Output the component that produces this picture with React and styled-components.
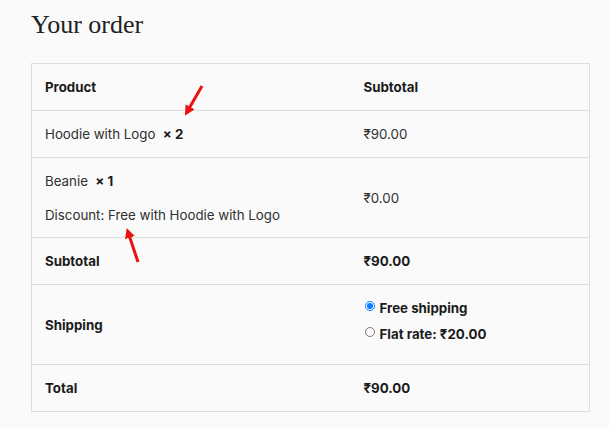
import React from "react";
import styled, { createGlobalStyle } from "styled-components";

const GlobalStyle = createGlobalStyle`
  html, body {
    margin: 0;
    background: #fafafa;
  }
  body {
    font-family: Inter, "Noto Sans", sans-serif;
    color: #1e1e1e;
  }
`;

function App() {
  return (
    <Page>
      <GlobalStyle />
      <Title>Your order</Title>
      <TableWrap>
        <OrderTable>
          <colgroup>
            <col style={{ width: 319 }} />
            <col />
          </colgroup>
          <thead>
            <tr>
              <HeadCell>Product</HeadCell>
              <HeadCell>Subtotal</HeadCell>
            </tr>
          </thead>
          <tbody>
            <tr>
              <Cell>
                Hoodie with Logo&nbsp;&nbsp;<Qty>× 2</Qty>
              </Cell>
              <Cell>₹90.00</Cell>
            </tr>
            <tr>
              <Cell $tall>
                <ItemLine>
                  Beanie&nbsp;&nbsp;<Qty>× 1</Qty>
                </ItemLine>
                <ItemLine>Discount: Free with Hoodie with Logo</ItemLine>
              </Cell>
              <Cell>₹0.00</Cell>
            </tr>
          </tbody>
          <tfoot>
            <tr>
              <HeadCell>Subtotal</HeadCell>
              <HeadCell>₹90.00</HeadCell>
            </tr>
            <tr>
              <HeadCell>Shipping</HeadCell>
              <HeadCell $tall>
                <RadioList>
                  <RadioRow>
                    <Radio type="radio" name="ship" defaultChecked />
                    Free shipping
                  </RadioRow>
                  <RadioRow>
                    <Radio type="radio" name="ship" />
                    Flat rate: ₹20.00
                  </RadioRow>
                </RadioList>
              </HeadCell>
            </tr>
            <tr>
              <HeadCell>Total</HeadCell>
              <HeadCell>₹90.00</HeadCell>
            </tr>
          </tfoot>
        </OrderTable>
        <Arrow width="609" height="428" viewBox="0 0 609 428">
          <defs>
            <marker id="tip" markerWidth="3.4" markerHeight="3.4" refX="2" refY="1.7" orient="auto">
              <path d="M0,0 L3.4,1.7 L0,3.4 Z" fill="#ee1111" />
            </marker>
          </defs>
          <line x1="202" y1="86" x2="187" y2="112" stroke="#ee1111" strokeWidth="3" markerEnd="url(#tip)" />
          <line x1="138" y1="262" x2="128" y2="232" stroke="#ee1111" strokeWidth="3" markerEnd="url(#tip)" />
        </Arrow>
      </TableWrap>
    </Page>
  );
}

const Page = styled.div`
  padding: 8px 19px 16px 31px;
`;

const Title = styled.h2`
  margin: 0 0 22px;
  font-family: "Liberation Serif", serif;
  font-weight: 400;
  font-size: 26px;
  line-height: 33px;
  color: #222;
`;

const TableWrap = styled.div`
  width: 559px;
`;

const OrderTable = styled.table`
  width: 100%;
  border-collapse: collapse;
  border: 1px solid #dedede;
  font-size: 13.3px;
  table-layout: fixed;
`;

const Cell = styled.td`
  height: ${(p) => (p.$tall ? 80 : 47)}px;
  padding: 0 13px;
  border-top: 1px solid #dedede;
  vertical-align: middle;
  text-align: left;
  font-weight: 400;
  color: #2f2f2f;
  box-sizing: border-box;
`;

const HeadCell = styled(Cell).attrs({ as: "th" })`
  font-weight: 700;
  color: #1b1b1b;
`;

const Qty = styled.strong`
  font-weight: 700;
  color: #1b1b1b;
`;

const ItemLine = styled.div`
  line-height: 34px;
`;

const RadioList = styled.div`
  display: flex;
  flex-direction: column;
  gap: 9px;
  padding-bottom: 6px;
`;

const RadioRow = styled.label`
  display: flex;
  align-items: center;
  gap: 5px;
  font-weight: 700;
  line-height: 17px;
`;

const Radio = styled.input`
  margin: 0 0 5px 1px;
  width: 10px;
  height: 10px;
  accent-color: #0a7cff;
`;

const Arrow = styled.svg`
  position: absolute;
  left: 0;
  top: 0;
  pointer-events: none;
`;

export default App;
